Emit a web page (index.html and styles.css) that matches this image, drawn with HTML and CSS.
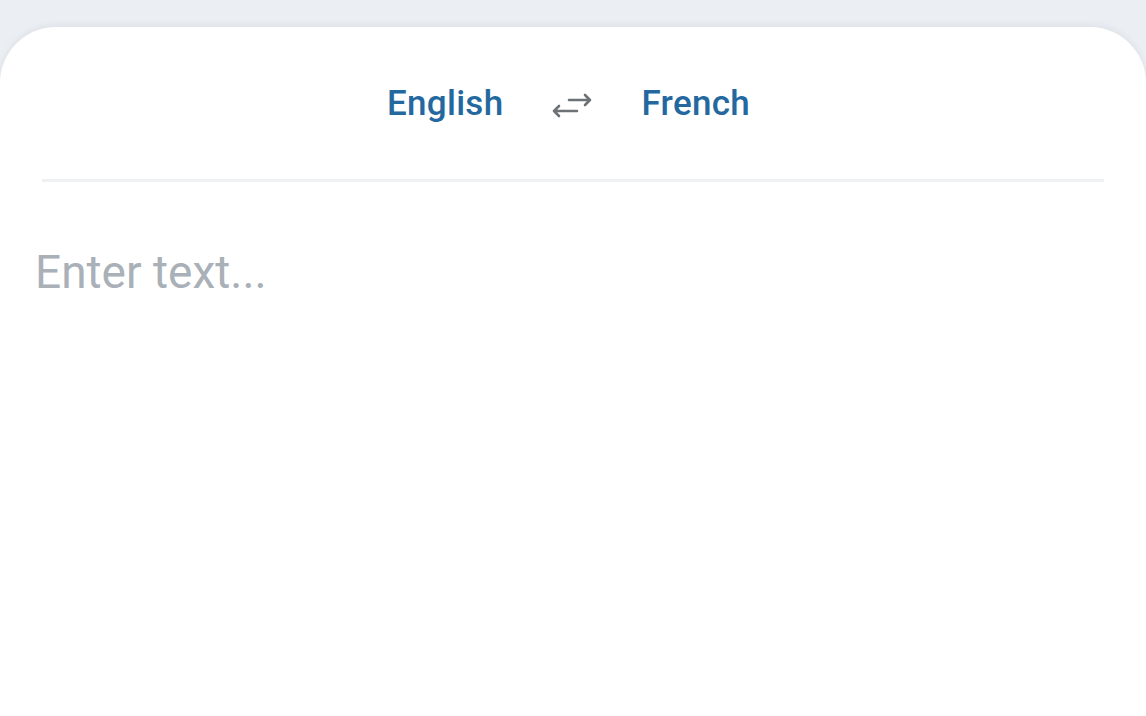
FILE: index.html
```html
<!DOCTYPE html>
<html>
<head>
<meta charset="utf-8">
<link rel="stylesheet" href="styles.css">
</head>
<body>
<div class="page">
  <div class="card">
    <div class="langbar">
      <span class="lang">English</span>
      <span class="swap">
        <svg width="44" height="40" viewBox="0 0 44 40" fill="none" stroke="#6d7277" stroke-width="2.6" stroke-linecap="round" stroke-linejoin="round">
          <path d="M19 15 H40 M35 10 L40 15 L35 20"/>
          <path d="M27 26 H4 M9 21 L4 26 L9 31"/>
        </svg>
      </span>
      <span class="lang">French</span>
    </div>
    <div class="divider"></div>
    <div class="input">Enter text...</div>
  </div>
</div>
</body>
</html>
```
FILE: styles.css
```css
html, body {
  margin: 0;
  padding: 0;
  background: #ebeff4;
  font-family: Roboto, "Liberation Sans", sans-serif;
}
.page {
  width: 1146px;
  height: 716px;
  overflow: hidden;
  padding-top: 27px;
  box-sizing: border-box;
}
.card {
  background: #ffffff;
  height: 760px;
  border-radius: 56px 56px 0 0;
  box-shadow: 0 -2px 6px rgba(120, 130, 140, 0.12);
  display: flex;
  flex-direction: column;
}
.langbar {
  display: flex;
  justify-content: center;
  align-items: center;
  height: 152px;
  padding-right: 9px;
}
.lang {
  color: #23689e;
  font-size: 35px;
  font-weight: 500;
  letter-spacing: 0.3px;
  margin-top: 1px;
}
.swap {
  display: flex;
  width: 138px;
  justify-content: center;
  margin-top: 4px;
}
.divider {
  margin: 0 42px;
  height: 3px;
  background: #eef0f2;
}
.input {
  padding: 63px 35px 0;
  color: #a9b0b7;
  font-size: 46px;
  font-weight: 400;
}
```
